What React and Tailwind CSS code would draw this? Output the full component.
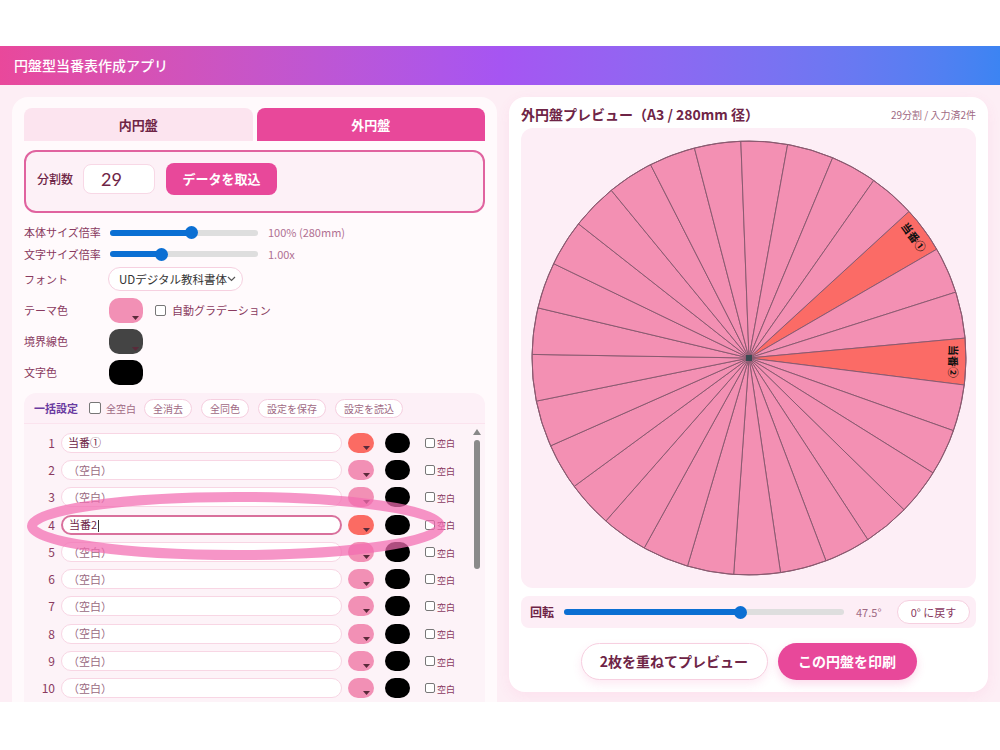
import React from "react";

const FONT = "font-['Noto_Sans_CJK_JP','Noto_Sans',sans-serif]";

function Slider({ frac, w }) {
  return (
    <div className="relative h-[13px] flex items-center" style={{ width: w }}>
      <div className="w-full h-[6px] rounded-full bg-[#dedede]" />
      <div className="absolute left-0 h-[6px] rounded-full bg-[#0b6fd3]" style={{ width: `${frac * 100}%` }} />
      <div
        className="absolute w-[13px] h-[13px] rounded-full bg-[#0b6fd3]"
        style={{ left: `calc(${frac * 100}% - 6.5px)` }}
      />
    </div>
  );
}

function Caret() {
  return (
    <svg width="7" height="4" viewBox="0 0 7 4" className="absolute right-[4px] bottom-[3px]">
      <polygon points="0,0 7,0 3.5,4" fill="#5a2a3a" />
    </svg>
  );
}

function Swatch({ color, w = 34, h = 25, caret = true, r = 10 }) {
  return (
    <div className="relative shrink-0" style={{ width: w, height: h, background: color, borderRadius: r }}>
      {caret && <Caret />}
    </div>
  );
}

function Check({ size = 11 }) {
  return <div className="shrink-0 border border-[#777] bg-white rounded-[2px]" style={{ width: size, height: size }} />;
}

function Pill({ children }) {
  return (
    <div className="h-[19px] px-[8px] flex items-center rounded-full bg-white border border-[#f6cfe0] text-[10px] text-[#a06a84] whitespace-nowrap">
      {children}
    </div>
  );
}

function Wheel() {
  const N = 29;
  const R = 217;
  const C = 220;
  const start = -42.5;
  const step = 360 / N;
  const pt = (deg, r = R) => {
    const a = (deg * Math.PI) / 180;
    return [C + r * Math.cos(a), C + r * Math.sin(a)];
  };
  const labels = { 0: "当番①", 3: "当番②" };
  const segs = [];
  for (let i = 0; i < N; i++) {
    const a0 = start + i * step;
    const a1 = a0 + step;
    const [x0, y0] = pt(a0);
    const [x1, y1] = pt(a1);
    const hi = labels[i] !== undefined;
    segs.push(
      <path
        key={i}
        d={`M${C},${C} L${x0},${y0} A${R},${R} 0 0 1 ${x1},${y1} Z`}
        fill={hi ? "#fb6b66" : "#f390b3"}
        stroke="#8a5a70"
        strokeWidth="1"
      />
    );
  }
  const texts = Object.entries(labels).map(([k, t]) => {
    const mid = start + (Number(k) + 0.5) * step;
    const [x, y] = pt(mid, 205);
    return (
      <text
        key={k}
        x={x}
        y={y}
        transform={`rotate(${mid + 90} ${x} ${y})`}
        textAnchor="middle"
        dominantBaseline="central"
        fontSize="11"
        fontWeight="700"
        fill="#111"
        fontFamily="'Noto Sans CJK JP', sans-serif"
      >
        {t}
      </text>
    );
  });
  return (
    <svg width="440" height="440" viewBox="0 0 440 440">
      {segs}
      <circle cx={C} cy={C} r={R} fill="none" stroke="#8a5a70" strokeWidth="1" />
      {texts}
      <rect x={C - 3} y={C - 3} width="6" height="6" fill="#3a4a52" />
    </svg>
  );
}

const rows = [
  { n: 1, t: "当番①", c: "#fb6b63" },
  { n: 2, t: "", c: "#f290b5" },
  { n: 3, t: "", c: "#f290b5" },
  { n: 4, t: "当番2", c: "#fb6b63", focus: true },
  { n: 5, t: "", c: "#f290b5" },
  { n: 6, t: "", c: "#f290b5" },
  { n: 7, t: "", c: "#f290b5" },
  { n: 8, t: "", c: "#f290b5" },
  { n: 9, t: "", c: "#f290b5" },
  { n: 10, t: "", c: "#f290b5" },
];

export default function App() {
  return (
    <div className={`relative w-[1000px] h-[750px] bg-white overflow-hidden ${FONT}`}>
      <div className="h-[46px] bg-white" />
      <div className="h-[39px] bg-gradient-to-r from-[#e9489b] via-[#a655f2] to-[#3c84f2] flex items-center px-[14px]">
        <span className="text-white text-[14px] font-medium">円盤型当番表作成アプリ</span>
      </div>
      <div className="h-[617px] overflow-hidden bg-[#fdeef5] flex gap-3 px-3 pt-3">
        {/* Left card */}
        <div className="w-[485px] shrink-0 bg-[#fffafc] rounded-t-2xl px-3 pt-[11px] flex flex-col">
          <div className="grid grid-cols-2 gap-1 h-[33px]">
            <div className="bg-[#fce4ef] rounded-t-lg flex items-center justify-center text-[13px] font-bold text-[#6e2446]">
              内円盤
            </div>
            <div className="bg-[#e8489a] rounded-t-lg flex items-center justify-center text-[13px] font-bold text-white">
              外円盤
            </div>
          </div>
          <div className="mt-[9px] h-[63px] border-2 border-[#e0639f] rounded-xl bg-[#fdf1f7] flex items-center px-[11px] pb-[4px]">
            <span className="text-[12px] text-[#6e2446] font-medium">分割数</span>
            <div className="ml-[10px] w-[72px] h-[30px] bg-white rounded-lg border border-[#f8d8e6] flex items-center pl-[17px] text-[18px] text-[#6e2446] font-['Lato',sans-serif]">
              29
            </div>
            <div className="ml-[11px] w-[111px] h-[32px] bg-[#e8489a] rounded-lg flex items-center justify-center text-white text-[13px] font-bold">
              データを取込
            </div>
          </div>

          <div className="mt-[10px] h-[20px] flex items-center">
            <span className="w-[86px] text-[11px] text-[#8a3a60]">本体サイズ倍率</span>
            <Slider frac={0.55} w={148} />
            <span className="ml-[10px] text-[11px] text-[#b07092]">100% (280mm)</span>
          </div>
          <div className="mt-[2px] h-[20px] flex items-center">
            <span className="w-[86px] text-[11px] text-[#8a3a60]">文字サイズ倍率</span>
            <Slider frac={0.35} w={148} />
            <span className="ml-[10px] text-[11px] text-[#b07092]">1.00x</span>
          </div>
          <div className="mt-[3px] h-[24px] flex items-center">
            <span className="w-[84px] text-[11px] text-[#8a3a60]">フォント</span>
            <div className="w-[135px] h-[24px] rounded-full border border-[#f6d0e0] bg-white flex items-center pl-[10px] pr-[7px] justify-between">
              <span className="text-[11.5px] text-[#333] whitespace-nowrap">UDデジタル教科書体</span>
              <svg width="9" height="6" viewBox="0 0 9 6" className="shrink-0">
                <path d="M1 1 L4.5 4.5 L8 1" fill="none" stroke="#555" strokeWidth="1.2" />
              </svg>
            </div>
          </div>
          <div className="mt-[6px] h-[26px] flex items-center">
            <span className="w-[85px] text-[11px] text-[#8a3a60]">テーマ色</span>
            <Swatch color="#f290b5" />
            <div className="ml-[12px]"><Check /></div>
            <span className="ml-[6px] text-[11px] text-[#8a3a60]">自動グラデーション</span>
          </div>
          <div className="mt-[5px] h-[26px] flex items-center">
            <span className="w-[85px] text-[11px] text-[#8a3a60]">境界線色</span>
            <Swatch color="#444444" />
          </div>
          <div className="mt-[5px] h-[26px] flex items-center">
            <span className="w-[85px] text-[11px] text-[#8a3a60]">文字色</span>
            <Swatch color="#000000" caret={false} />
          </div>

          <div className="mt-[8px] rounded-xl bg-[#fdf0f7] flex flex-col">
            <div className="h-[31px] flex items-center px-[10px] border-b border-[#fbe3ee]">
              <span className="text-[11px] font-bold text-[#6a3aa0]">一括設定</span>
              <div className="ml-[11px]"><Check size={12} /></div>
              <span className="ml-[5px] text-[10px] text-[#a06a84]">全空白</span>
              <div className="ml-[8px] flex gap-[9px]">
                <Pill>全消去</Pill>
                <Pill>全同色</Pill>
                <Pill>設定を保存</Pill>
                <Pill>設定を読込</Pill>
              </div>
            </div>
            <div className="flex bg-[#fdf3f8]">
              <div className="flex-1 pt-[5px] flex flex-col">
                {rows.map((r) => (
                  <div key={r.n} className="h-[27.3px] flex items-center">
                    <span className="w-[31px] text-right text-[12px] text-[#8a3a60]">{r.n}</span>
                    <div
                      className={`ml-[6px] w-[281px] h-[20px] rounded-full bg-white flex items-center pl-[6px] text-[11px] ${
                        r.focus ? "border-2 border-[#d9709c]" : "border border-[#f8d6e4]"
                      }`}
                    >
                      {r.t ? (
                        <span className="text-[#6e2446]">
                          {r.t}
                          {r.focus && <span className="inline-block w-px h-[12px] bg-[#333] align-middle ml-px" />}
                        </span>
                      ) : (
                        <span className="text-[#9a6a82]">（空白）</span>
                      )}
                    </div>
                    <div className="ml-[6px]">
                      <Swatch color={r.c} w={26} h={20} r={10} />
                    </div>
                    <div className="ml-[11px]">
                      <Swatch color="#000" w={25} h={20} r={10} caret={false} />
                    </div>
                    <div className="ml-[15px]"><Check size={10} /></div>
                    <span className="ml-[2px] mt-[3px] text-[9px] text-[#8a3a60]">空白</span>
                  </div>
                ))}
              </div>
              <div className="w-[10px] mr-[3px] flex flex-col items-center pt-[5px]">
                <svg width="8" height="6" viewBox="0 0 8 6">
                  <polygon points="4,0 8,6 0,6" fill="#888" />
                </svg>
                <div className="mt-[5px] w-[6px] h-[129px] rounded-full bg-[#8a8a8a]" />
              </div>
            </div>
          </div>
        </div>

        {/* Right card */}
        <div className="w-[479px] h-[595px] shrink-0 bg-white rounded-2xl px-3 pt-2 pb-3 flex flex-col shadow-[0_4px_14px_rgba(236,72,153,0.08)]">
          <div className="h-[23px] flex items-center justify-between pb-[4px]">
            <span className="text-[14px] font-bold text-[#6e2446]">外円盤プレビュー（A3 / 280mm 径）</span>
            <span className="text-[10px] text-[#a06a84]">29分割 / 入力済2件</span>
          </div>
          <div className="h-[460px] rounded-xl bg-[#fdeef6] flex items-center justify-center">
            <Wheel />
          </div>
          <div className="mt-2 h-[32px] rounded-lg bg-[#fdeef6] flex items-center pl-[9px] pr-[6px]">
            <span className="text-[12px] font-bold text-[#6e2446]">回転</span>
            <div className="ml-[10px]">
              <Slider frac={0.632} w={280} />
            </div>
            <span className="ml-[12px] text-[11px] text-[#a06a84]">47.5°</span>
            <div className="ml-auto w-[73px] h-[24px] rounded-full bg-white border border-[#f6d0e0] flex items-center justify-center text-[11px] text-[#8a3a60]">
              0° に戻す
            </div>
          </div>
          <div className="mt-[15px] h-[37px] flex justify-center gap-[10px]">
            <div className="w-[187px] h-[37px] rounded-full bg-white border border-[#f7cfe0] flex items-center justify-center text-[14px] font-bold text-[#6e2446] shadow-[0_4px_10px_rgba(236,72,153,0.12)]">
              2枚を重ねてプレビュー
            </div>
            <div className="w-[139px] h-[37px] rounded-full bg-[#e8489a] flex items-center justify-center text-[14px] font-bold text-white shadow-[0_4px_10px_rgba(236,72,153,0.2)]">
              この円盤を印刷
            </div>
          </div>
        </div>
      </div>

      {/* annotation ellipse */}
      <svg className="absolute left-[20px] top-[484px] pointer-events-none" width="440" height="84" viewBox="0 0 440 84">
        <ellipse cx="216" cy="42" rx="204" ry="29" fill="none" stroke="#f36cb2" strokeOpacity="0.72" strokeWidth="10" />
      </svg>
    </div>
  );
}
